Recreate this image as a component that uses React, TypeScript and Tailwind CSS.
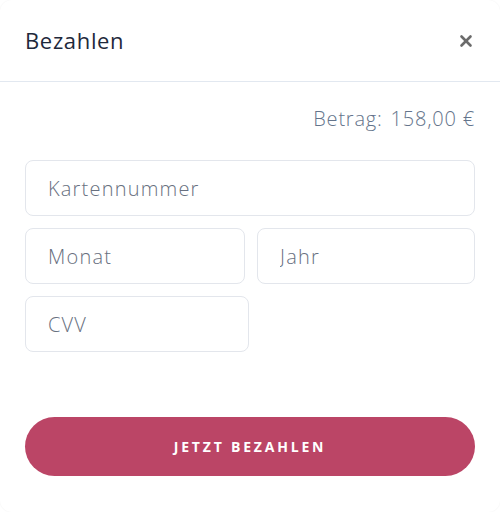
import { X } from "lucide-react";

const inputClass =
  "h-[56px] rounded-lg border border-[#e3e6ec] bg-white px-[22px] text-[20px] font-light tracking-[0.06em] text-[#4b5565] placeholder:text-[#687080] outline-none";

export default function App() {
  return (
    <div className="min-h-[512px] w-[500px] bg-white" style={{ fontFamily: "'Open Sans', Lato, sans-serif" }}>
      <div className="h-[512px] rounded-xl bg-white shadow-[0_0_2px_rgba(0,0,0,0.06)]">
        {/* Header */}
        <div className="flex h-[82px] items-center justify-between border-b border-[#e2e8f0] px-[25px]">
          <h2 className="text-[22px] font-normal tracking-[0.03em] text-[#1e293b]">Bezahlen</h2>
          <button className="text-[#6b6b6b]">
            <X className="h-[18px] w-[18px]" strokeWidth={3.5} />
          </button>
        </div>

        <div className="px-[25px]">
          {/* Amount */}
          <div className="flex justify-end pt-[22px] text-[20px] font-light tracking-[0.04em] text-[#64748b]">
            <span>Betrag:</span>
            <span className="ml-[8px]">158,00 €</span>
          </div>

          {/* Card form */}
          <div className="mt-[26px] flex flex-col gap-[12px]">
            <input className={inputClass} placeholder="Kartennummer" />
            <div className="flex gap-[12px]">
              <input className={`${inputClass} w-[220px]`} placeholder="Monat" />
              <input className={`${inputClass} w-[218px]`} placeholder="Jahr" />
            </div>
            <input className={`${inputClass} w-[224px]`} placeholder="CVV" />
          </div>

          <button className="mt-[65px] flex h-[59px] w-full items-center justify-center rounded-full bg-[#bb4566] text-[14px] font-bold tracking-[0.2em] text-white">
            JETZT BEZAHLEN
          </button>
        </div>
      </div>
    </div>
  );
}
